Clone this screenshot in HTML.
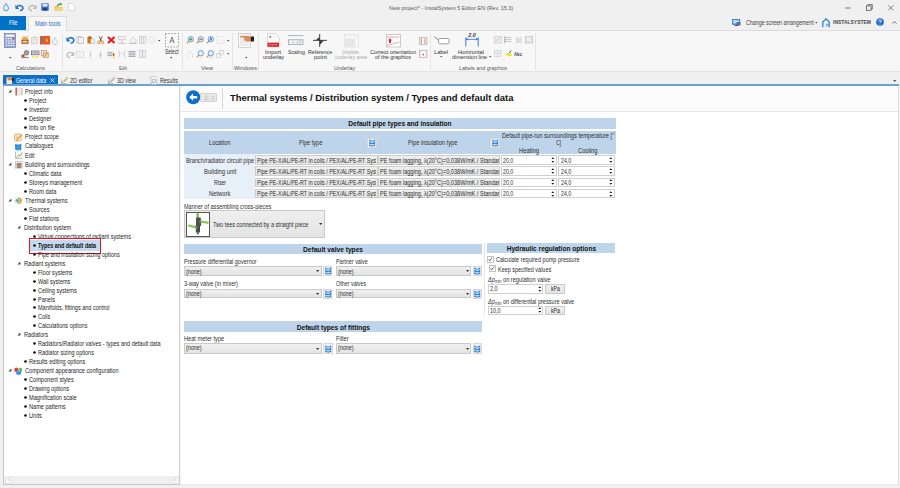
<!DOCTYPE html>
<html><head><meta charset="utf-8">
<style>
*{margin:0;padding:0;box-sizing:border-box}
html,body{width:900px;height:488px;overflow:hidden;background:#f0f0f0;font-family:"Liberation Sans",sans-serif;color:#1a1a1a;position:relative}
.a{position:absolute}
.t{position:absolute;white-space:nowrap;transform-origin:0 50%;-webkit-text-stroke:0}
svg{position:absolute;overflow:visible}
</style></head><body>
<div class="t" style="left:388.60px;top:4px;font-size:6.20px;line-height:8px;transform:scaleX(0.879);color:#5a5a5a;-webkit-text-stroke:0;">New project* - InstalSystem 5 Editor EN (Rev. 15.3)</div>
<svg style="left:844.5px;top:6.5px" width="6" height="2" viewBox="0 0 6 2"><path d="M0.2 1H5.6" stroke="#444" stroke-width="0.7"/></svg>
<svg style="left:866.0px;top:4.0px" width="7" height="7" viewBox="0 0 7 7"><rect x="0.6" y="1.9" width="4.4" height="4.4" fill="none" stroke="#444" stroke-width="0.7"/><path d="M1.9 1.9V0.6H6.3V5H5" fill="none" stroke="#444" stroke-width="0.7"/></svg>
<svg style="left:888px;top:4.5px" width="6" height="6"><path d="M0.3 0.3L5.3 5.3M5.3 0.3L0.3 5.3" stroke="#444" stroke-width="0.65"/></svg>
<div class="a" style="left:0px;top:16px;width:26px;height:14px;background:#0072c6"></div>
<div class="t" style="left:8.80px;top:19px;font-size:6.40px;line-height:8px;transform:scaleX(0.815);color:#fff;-webkit-text-stroke:0;">File</div>
<div class="a" style="left:28px;top:16px;width:39px;height:15px;background:#f7f7f7;border:1px solid #dcdcdc;border-bottom:none;z-index:2"></div>
<div class="t" style="left:35.40px;top:20px;font-size:6.40px;line-height:8px;transform:scaleX(0.878);color:#2a6ab8;-webkit-text-stroke:0;z-index:3">Main tools</div>
<div class="t" style="left:745.80px;top:19px;font-size:6.40px;line-height:8px;transform:scaleX(0.832);color:#444;-webkit-text-stroke:0;">Change screen arrangement</div>
<div class="t" style="left:833.00px;top:18px;font-size:6.20px;line-height:8px;transform:scaleX(0.801);font-weight:bold;color:#4a4a4a;-webkit-text-stroke:0;">INSTALSYSTEM</div>
<div class="a" style="left:0px;top:30px;width:900px;height:42px;background:#f7f7f7;border-top:1px solid #dcdcdc;border-bottom:1px solid #dadada"></div>
<div class="a" style="left:0px;top:71px;width:900px;height:1px;background:#e3e3e3"></div>
<div class="a" style="left:62px;top:33px;width:1px;height:37px;background:#e4e4e4"></div>
<div class="a" style="left:182px;top:33px;width:1px;height:37px;background:#e4e4e4"></div>
<div class="a" style="left:232px;top:33px;width:1px;height:37px;background:#e4e4e4"></div>
<div class="a" style="left:258px;top:33px;width:1px;height:37px;background:#e4e4e4"></div>
<div class="a" style="left:430px;top:33px;width:1px;height:37px;background:#e4e4e4"></div>
<div class="a" style="left:535px;top:33px;width:1px;height:37px;background:#e4e4e4"></div>
<div class="t" style="left:16.00px;top:64px;font-size:6.00px;line-height:8px;transform:scaleX(0.887);color:#555;-webkit-text-stroke:0;">Calculations</div>
<div class="t" style="left:119.00px;top:64px;font-size:6.00px;line-height:8px;transform:scaleX(0.774);color:#555;-webkit-text-stroke:0;">Edit</div>
<div class="t" style="left:201.00px;top:64px;font-size:6.00px;line-height:8px;transform:scaleX(0.930);color:#555;-webkit-text-stroke:0;">View</div>
<div class="t" style="left:234.00px;top:64px;font-size:6.00px;line-height:8px;transform:scaleX(0.945);color:#555;-webkit-text-stroke:0;">Windows</div>
<div class="t" style="left:334.00px;top:64px;font-size:6.00px;line-height:8px;transform:scaleX(0.875);color:#555;-webkit-text-stroke:0;">Underlay</div>
<div class="t" style="left:459.00px;top:64px;font-size:6.00px;line-height:8px;transform:scaleX(0.894);color:#555;-webkit-text-stroke:0;">Labels and graphics</div>
<div class="t" style="left:164.50px;top:48px;font-size:6.60px;line-height:8px;transform:scaleX(0.736);color:#333;-webkit-text-stroke:0;">Select</div>
<div class="t" style="left:265.20px;top:48px;font-size:6.00px;line-height:8px;transform:scaleX(0.947);color:#333;-webkit-text-stroke:0;">Import</div>
<div class="t" style="left:263.00px;top:53px;font-size:6.00px;line-height:8px;transform:scaleX(0.917);color:#333;-webkit-text-stroke:0;">underlay</div>
<div class="t" style="left:287.60px;top:48px;font-size:6.00px;line-height:8px;transform:scaleX(0.864);color:#333;-webkit-text-stroke:0;">Scaling</div>
<div class="t" style="left:307.90px;top:48px;font-size:6.00px;line-height:8px;transform:scaleX(0.871);color:#333;-webkit-text-stroke:0;">Reference</div>
<div class="t" style="left:314.00px;top:53px;font-size:6.00px;line-height:8px;transform:scaleX(0.984);color:#333;-webkit-text-stroke:0;">point</div>
<div class="t" style="left:342.00px;top:48px;font-size:6.00px;line-height:8px;transform:scaleX(0.968);color:#aaa;-webkit-text-stroke:0;">Visible</div>
<div class="t" style="left:335.00px;top:53px;font-size:6.00px;line-height:8px;transform:scaleX(0.872);color:#aaa;-webkit-text-stroke:0;">underlay area</div>
<div class="t" style="left:370.00px;top:48px;font-size:6.00px;line-height:8px;transform:scaleX(0.932);color:#333;-webkit-text-stroke:0;">Correct orientation</div>
<div class="t" style="left:375.00px;top:53px;font-size:6.00px;line-height:8px;transform:scaleX(0.915);color:#333;-webkit-text-stroke:0;">of the graphics</div>
<div class="t" style="left:434.00px;top:48px;font-size:6.00px;line-height:8px;transform:scaleX(0.954);color:#333;-webkit-text-stroke:0;">Label</div>
<div class="t" style="left:458.00px;top:48px;font-size:6.00px;line-height:8px;transform:scaleX(0.963);color:#333;-webkit-text-stroke:0;">Horizontal</div>
<div class="t" style="left:452.00px;top:53px;font-size:6.00px;line-height:8px;transform:scaleX(0.912);color:#333;-webkit-text-stroke:0;">dimension line</div>
<div class="a" style="left:3px;top:75px;width:55px;height:10px;background:#0b6fc9"></div>
<div class="t" style="left:15.80px;top:77px;font-size:6.40px;line-height:8px;transform:scaleX(0.816);color:#fff;-webkit-text-stroke:0;">General data</div>
<div class="t" style="left:70.20px;top:77px;font-size:6.40px;line-height:8px;transform:scaleX(0.870);color:#333;-webkit-text-stroke:0;">2D editor</div>
<div class="t" style="left:116.90px;top:77px;font-size:6.40px;line-height:8px;transform:scaleX(0.830);color:#333;-webkit-text-stroke:0;">3D view</div>
<div class="t" style="left:159.60px;top:77px;font-size:6.40px;line-height:8px;transform:scaleX(0.839);color:#333;-webkit-text-stroke:0;">Results</div>
<div class="a" style="left:3px;top:84px;width:896px;height:2px;background:#67a2d8"></div>
<div class="a" style="left:3px;top:86px;width:177px;height:399px;background:#fff;border:1px solid #c6c6c6;border-right-color:#d2d2d2;border-top:none"></div>
<div class="a" style="left:4px;top:476px;width:175px;height:8px;background:#f0f0f0"></div>
<div class="a" style="left:4.5px;top:476.5px;width:7px;height:7px;background:#f7f7f7;border:0.6px solid #e6e6e6"></div>
<div class="a" style="left:171.5px;top:476.5px;width:7px;height:7px;background:#f7f7f7;border:0.6px solid #e6e6e6"></div>
<svg style="left:6.8px;top:478.3px" width="3" height="4" viewBox="0 0 3 4"><path d="M2.4 0.3L0.4 1.8L2.4 3.3Z" fill="#cfcfcf"/></svg>
<svg style="left:174.0px;top:478.3px" width="3" height="4" viewBox="0 0 3 4"><path d="M0.4 0.3L2.4 1.8L0.4 3.3Z" fill="#cfcfcf"/></svg>
<div class="a" style="left:180px;top:86px;width:1.5px;height:399px;background:#f2f2f2"></div>
<div class="a" style="left:181px;top:86px;width:718px;height:399px;background:#fff;border-right:1.2px solid #e0e0e0;border-bottom:1.2px solid #e8e8e8"></div>
<div class="a" style="left:181px;top:86px;width:717px;height:25.6px;background:#fbfbfb;border-bottom:1.6px solid #e6e6e6"></div>
<div class="a" style="left:222px;top:88px;width:1px;height:21px;background:#d8d8d8"></div>
<div class="t" style="left:229.80px;top:93px;font-size:9.00px;line-height:11px;transform:scaleX(1.052);font-weight:bold;color:#111;">Thermal systems / Distribution system / Types and default data</div>
<svg style="left:7.6px;top:89.1px" width="4" height="4"><path d="M3.4 0.4L3.4 3.4L0.4 3.4Z" fill="#404040"/></svg>
<div class="t" style="left:24.60px;top:88px;font-size:6.50px;line-height:8px;transform:scaleX(0.860);color:#262626;">Project info</div>
<svg style="left:24.2px;top:99.0px" width="3" height="3" viewBox="0 0 3 3"><circle cx="1.5" cy="1.5" r="1.35" fill="#111"/></svg>
<div class="t" style="left:29.00px;top:97px;font-size:6.50px;line-height:8px;transform:scaleX(0.860);color:#262626;">Project</div>
<svg style="left:24.2px;top:108.0px" width="3" height="3" viewBox="0 0 3 3"><circle cx="1.5" cy="1.5" r="1.35" fill="#111"/></svg>
<div class="t" style="left:29.00px;top:106px;font-size:6.50px;line-height:8px;transform:scaleX(0.860);color:#262626;">Investor</div>
<svg style="left:24.2px;top:117.0px" width="3" height="3" viewBox="0 0 3 3"><circle cx="1.5" cy="1.5" r="1.35" fill="#111"/></svg>
<div class="t" style="left:29.00px;top:115px;font-size:6.50px;line-height:8px;transform:scaleX(0.860);color:#262626;">Designer</div>
<svg style="left:24.2px;top:126.0px" width="3" height="3" viewBox="0 0 3 3"><circle cx="1.5" cy="1.5" r="1.35" fill="#111"/></svg>
<div class="t" style="left:29.00px;top:124px;font-size:6.50px;line-height:8px;transform:scaleX(0.860);color:#262626;">Info on file</div>
<div class="t" style="left:24.60px;top:133px;font-size:6.50px;line-height:8px;transform:scaleX(0.860);color:#262626;">Project scope</div>
<div class="t" style="left:24.60px;top:142px;font-size:6.50px;line-height:8px;transform:scaleX(0.860);color:#262626;">Catalogues</div>
<div class="t" style="left:24.60px;top:152px;font-size:6.50px;line-height:8px;transform:scaleX(0.860);color:#262626;">Edit</div>
<svg style="left:7.6px;top:162.1px" width="4" height="4"><path d="M3.4 0.4L3.4 3.4L0.4 3.4Z" fill="#404040"/></svg>
<div class="t" style="left:24.60px;top:161px;font-size:6.50px;line-height:8px;transform:scaleX(0.860);color:#262626;">Building and surroundings</div>
<svg style="left:24.2px;top:172.0px" width="3" height="3" viewBox="0 0 3 3"><circle cx="1.5" cy="1.5" r="1.35" fill="#111"/></svg>
<div class="t" style="left:29.00px;top:170px;font-size:6.50px;line-height:8px;transform:scaleX(0.860);color:#262626;">Climatic data</div>
<svg style="left:24.2px;top:181.0px" width="3" height="3" viewBox="0 0 3 3"><circle cx="1.5" cy="1.5" r="1.35" fill="#111"/></svg>
<div class="t" style="left:29.00px;top:179px;font-size:6.50px;line-height:8px;transform:scaleX(0.860);color:#262626;">Storeys management</div>
<svg style="left:24.2px;top:190.0px" width="3" height="3" viewBox="0 0 3 3"><circle cx="1.5" cy="1.5" r="1.35" fill="#111"/></svg>
<div class="t" style="left:29.00px;top:188px;font-size:6.50px;line-height:8px;transform:scaleX(0.860);color:#262626;">Room data</div>
<svg style="left:7.6px;top:198.1px" width="4" height="4"><path d="M3.4 0.4L3.4 3.4L0.4 3.4Z" fill="#404040"/></svg>
<div class="t" style="left:24.60px;top:197px;font-size:6.50px;line-height:8px;transform:scaleX(0.860);color:#262626;">Thermal systems</div>
<svg style="left:24.2px;top:208.0px" width="3" height="3" viewBox="0 0 3 3"><circle cx="1.5" cy="1.5" r="1.35" fill="#111"/></svg>
<div class="t" style="left:29.00px;top:206px;font-size:6.50px;line-height:8px;transform:scaleX(0.860);color:#262626;">Sources</div>
<svg style="left:24.2px;top:217.0px" width="3" height="3" viewBox="0 0 3 3"><circle cx="1.5" cy="1.5" r="1.35" fill="#111"/></svg>
<div class="t" style="left:29.00px;top:215px;font-size:6.50px;line-height:8px;transform:scaleX(0.860);color:#262626;">Flat stations</div>
<svg style="left:16.8px;top:225.1px" width="4" height="4"><path d="M3.4 0.4L3.4 3.4L0.4 3.4Z" fill="#404040"/></svg>
<div class="t" style="left:23.60px;top:224px;font-size:6.50px;line-height:8px;transform:scaleX(0.860);color:#262626;">Distribution system</div>
<svg style="left:32.7px;top:235.0px" width="3" height="3" viewBox="0 0 3 3"><circle cx="1.5" cy="1.5" r="1.35" fill="#111"/></svg>
<div class="t" style="left:38.00px;top:233px;font-size:6.50px;line-height:8px;transform:scaleX(0.850);color:#262626;">Virtual connections of radiant systems</div>
<div class="a" style="left:28.5px;top:238px;width:72.5px;height:15.5px;border:1.5px solid #e8101a"></div>
<div class="a" style="left:30px;top:240px;width:69.5px;height:10.5px;background:#c4daef"></div>
<svg style="left:32.9px;top:244.0px" width="3" height="3" viewBox="0 0 3 3"><circle cx="1.5" cy="1.5" r="1.35" fill="#111"/></svg>
<div class="t" style="left:38.00px;top:242px;font-size:6.50px;line-height:8px;transform:scaleX(0.829);font-weight:bold;color:#111;">Types and default data</div>
<svg style="left:32.7px;top:253.0px" width="3" height="3" viewBox="0 0 3 3"><circle cx="1.5" cy="1.5" r="1.35" fill="#111"/></svg>
<div class="t" style="left:38.00px;top:251px;font-size:6.50px;line-height:8px;transform:scaleX(0.850);color:#262626;">Pipe and insulation sizing options</div>
<svg style="left:16.8px;top:261.1px" width="4" height="4"><path d="M3.4 0.4L3.4 3.4L0.4 3.4Z" fill="#404040"/></svg>
<div class="t" style="left:23.60px;top:260px;font-size:6.50px;line-height:8px;transform:scaleX(0.860);color:#262626;">Radiant systems</div>
<svg style="left:32.7px;top:271.0px" width="3" height="3" viewBox="0 0 3 3"><circle cx="1.5" cy="1.5" r="1.35" fill="#111"/></svg>
<div class="t" style="left:38.00px;top:269px;font-size:6.50px;line-height:8px;transform:scaleX(0.850);color:#262626;">Floor systems</div>
<svg style="left:32.7px;top:280.0px" width="3" height="3" viewBox="0 0 3 3"><circle cx="1.5" cy="1.5" r="1.35" fill="#111"/></svg>
<div class="t" style="left:38.00px;top:278px;font-size:6.50px;line-height:8px;transform:scaleX(0.850);color:#262626;">Wall systems</div>
<svg style="left:32.7px;top:289.0px" width="3" height="3" viewBox="0 0 3 3"><circle cx="1.5" cy="1.5" r="1.35" fill="#111"/></svg>
<div class="t" style="left:38.00px;top:287px;font-size:6.50px;line-height:8px;transform:scaleX(0.850);color:#262626;">Ceiling systems</div>
<svg style="left:32.7px;top:298.0px" width="3" height="3" viewBox="0 0 3 3"><circle cx="1.5" cy="1.5" r="1.35" fill="#111"/></svg>
<div class="t" style="left:38.00px;top:296px;font-size:6.50px;line-height:8px;transform:scaleX(0.850);color:#262626;">Panels</div>
<svg style="left:32.7px;top:306.0px" width="3" height="3" viewBox="0 0 3 3"><circle cx="1.5" cy="1.5" r="1.35" fill="#111"/></svg>
<div class="t" style="left:38.00px;top:304px;font-size:6.50px;line-height:8px;transform:scaleX(0.850);color:#262626;">Manifolds, fittings and control</div>
<svg style="left:32.7px;top:315.0px" width="3" height="3" viewBox="0 0 3 3"><circle cx="1.5" cy="1.5" r="1.35" fill="#111"/></svg>
<div class="t" style="left:38.00px;top:313px;font-size:6.50px;line-height:8px;transform:scaleX(0.850);color:#262626;">Coils</div>
<svg style="left:32.7px;top:324.0px" width="3" height="3" viewBox="0 0 3 3"><circle cx="1.5" cy="1.5" r="1.35" fill="#111"/></svg>
<div class="t" style="left:38.00px;top:322px;font-size:6.50px;line-height:8px;transform:scaleX(0.850);color:#262626;">Calculations options</div>
<svg style="left:16.8px;top:332.1px" width="4" height="4"><path d="M3.4 0.4L3.4 3.4L0.4 3.4Z" fill="#404040"/></svg>
<div class="t" style="left:23.60px;top:331px;font-size:6.50px;line-height:8px;transform:scaleX(0.860);color:#262626;">Radiators</div>
<svg style="left:32.7px;top:342.0px" width="3" height="3" viewBox="0 0 3 3"><circle cx="1.5" cy="1.5" r="1.35" fill="#111"/></svg>
<div class="t" style="left:38.00px;top:340px;font-size:6.50px;line-height:8px;transform:scaleX(0.850);color:#262626;">Radiators/Radiator valves - types and default data</div>
<svg style="left:32.7px;top:351.0px" width="3" height="3" viewBox="0 0 3 3"><circle cx="1.5" cy="1.5" r="1.35" fill="#111"/></svg>
<div class="t" style="left:38.00px;top:349px;font-size:6.50px;line-height:8px;transform:scaleX(0.850);color:#262626;">Radiator sizing options</div>
<svg style="left:24.2px;top:360.0px" width="3" height="3" viewBox="0 0 3 3"><circle cx="1.5" cy="1.5" r="1.35" fill="#111"/></svg>
<div class="t" style="left:29.00px;top:358px;font-size:6.50px;line-height:8px;transform:scaleX(0.860);color:#262626;">Results editing options</div>
<svg style="left:7.6px;top:368.1px" width="4" height="4"><path d="M3.4 0.4L3.4 3.4L0.4 3.4Z" fill="#404040"/></svg>
<div class="t" style="left:24.60px;top:367px;font-size:6.50px;line-height:8px;transform:scaleX(0.860);color:#262626;">Component appearance configuration</div>
<svg style="left:24.2px;top:378.0px" width="3" height="3" viewBox="0 0 3 3"><circle cx="1.5" cy="1.5" r="1.35" fill="#111"/></svg>
<div class="t" style="left:29.00px;top:376px;font-size:6.50px;line-height:8px;transform:scaleX(0.860);color:#262626;">Component styles</div>
<svg style="left:24.2px;top:387.0px" width="3" height="3" viewBox="0 0 3 3"><circle cx="1.5" cy="1.5" r="1.35" fill="#111"/></svg>
<div class="t" style="left:29.00px;top:385px;font-size:6.50px;line-height:8px;transform:scaleX(0.860);color:#262626;">Drawing options</div>
<svg style="left:24.2px;top:396.0px" width="3" height="3" viewBox="0 0 3 3"><circle cx="1.5" cy="1.5" r="1.35" fill="#111"/></svg>
<div class="t" style="left:29.00px;top:394px;font-size:6.50px;line-height:8px;transform:scaleX(0.860);color:#262626;">Magnification scale</div>
<svg style="left:24.2px;top:405.0px" width="3" height="3" viewBox="0 0 3 3"><circle cx="1.5" cy="1.5" r="1.35" fill="#111"/></svg>
<div class="t" style="left:29.00px;top:403px;font-size:6.50px;line-height:8px;transform:scaleX(0.860);color:#262626;">Name patterns</div>
<svg style="left:24.2px;top:414.0px" width="3" height="3" viewBox="0 0 3 3"><circle cx="1.5" cy="1.5" r="1.35" fill="#111"/></svg>
<div class="t" style="left:29.00px;top:412px;font-size:6.50px;line-height:8px;transform:scaleX(0.860);color:#262626;">Units</div>
<svg style="left:185.5px;top:90px" width="15" height="15"><circle cx="7.2" cy="7.2" r="7" fill="#0e6fcb"/><path d="M3.2 7.2L7 3.6V5.9H11.2V8.5H7V10.8Z" fill="#fff"/></svg>
<div class="a" style="left:200px;top:92.5px;width:17px;height:9.5px;background:#e9e9e9;border:1px solid #d2d2d2;border-radius:1px;z-index:0"></div>
<svg style="left:201px;top:93px" width="16" height="9"><path d="M3.5 6.5h4M4.2 6.5v-2.5a1.3 1.3 0 0 1 2.6 0v2.5" stroke="#bbb" stroke-width="0.7" fill="none"/><path d="M10.5 2.5l1.5 1.5l1.5-1.5M10.5 4.5l1.5 1.5l1.5-1.5M12 6v1.5" stroke="#bbb" stroke-width="0.7" fill="none"/></svg>
<div class="a" style="left:184px;top:118px;width:432px;height:11px;background:#bdd4ea"></div>
<div class="t" style="left:348.30px;top:120px;font-size:6.60px;line-height:8px;font-weight:bold;color:#111;">Default pipe types and insulation</div>
<div class="a" style="left:184px;top:131px;width:432px;height:23px;background:#bdd4ea"></div>
<div class="a" style="left:184px;top:154px;width:71px;height:45px;background:#e7eff8"></div>
<div class="t" style="left:208.70px;top:139px;font-size:6.30px;line-height:8px;transform:scaleX(0.894);color:#2e2e2e;">Location</div>
<div class="t" style="left:299.00px;top:139px;font-size:6.30px;line-height:8px;transform:scaleX(0.887);color:#2e2e2e;">Pipe type</div>
<div class="t" style="left:408.30px;top:139px;font-size:6.30px;line-height:8px;transform:scaleX(0.904);color:#2e2e2e;">Pipe insulation type</div>
<div class="t" style="left:501.70px;top:132px;font-size:6.30px;line-height:8px;transform:scaleX(0.902);color:#2e2e2e;">Default pipe-run surroundings temperature [°</div>
<div class="t" style="left:555.80px;top:139px;font-size:6.30px;line-height:8px;transform:scaleX(0.794);color:#2e2e2e;">C]</div>
<div class="t" style="left:518.80px;top:147px;font-size:6.30px;line-height:8px;transform:scaleX(0.921);color:#2e2e2e;">Heating</div>
<div class="t" style="left:577.50px;top:147px;font-size:6.30px;line-height:8px;transform:scaleX(0.913);color:#2e2e2e;">Cooling</div>
<div class="a" style="left:367.3px;top:138.3px;width:10px;height:10px;background:#f4f1ef;border:1px solid #d9d6d3"></div>
<svg style="left:369.2px;top:139.4px" width="6.5" height="8" viewBox="0 0 6.5 8"><path d="M0.3 0.40Q3.25 1.40 6.2 0.40V2.20Q3.25 3.00 0.3 2.20Z" fill="#1677d8"/><ellipse cx="3.25" cy="1.15" rx="1.9" ry="0.55" fill="#bfe4ff"/><path d="M0.3 2.85Q3.25 3.85 6.2 2.85V4.65Q3.25 5.45 0.3 4.65Z" fill="#1677d8"/><ellipse cx="3.25" cy="3.60" rx="1.9" ry="0.55" fill="#bfe4ff"/><path d="M0.3 5.30Q3.25 6.30 6.2 5.30V7.10Q3.25 7.90 0.3 7.10Z" fill="#1677d8"/><ellipse cx="3.25" cy="6.05" rx="1.9" ry="0.55" fill="#bfe4ff"/></svg>
<div class="a" style="left:489.7px;top:138.3px;width:10px;height:10px;background:#f4f1ef;border:1px solid #d9d6d3"></div>
<svg style="left:491.6px;top:139.4px" width="6.5" height="8" viewBox="0 0 6.5 8"><path d="M0.3 0.40Q3.25 1.40 6.2 0.40V2.20Q3.25 3.00 0.3 2.20Z" fill="#1677d8"/><ellipse cx="3.25" cy="1.15" rx="1.9" ry="0.55" fill="#bfe4ff"/><path d="M0.3 2.85Q3.25 3.85 6.2 2.85V4.65Q3.25 5.45 0.3 4.65Z" fill="#1677d8"/><ellipse cx="3.25" cy="3.60" rx="1.9" ry="0.55" fill="#bfe4ff"/><path d="M0.3 5.30Q3.25 6.30 6.2 5.30V7.10Q3.25 7.90 0.3 7.10Z" fill="#1677d8"/><ellipse cx="3.25" cy="6.05" rx="1.9" ry="0.55" fill="#bfe4ff"/></svg>
<div class="t" style="left:185.50px;top:157px;font-size:6.30px;line-height:8px;transform:scaleX(0.910);color:#2e2e2e;">Branch/radiator circuit pipe</div>
<div class="a" style="left:255px;top:155px;width:122.5px;height:9.6px;background:linear-gradient(#efefef,#e5e5e5);border:1px solid #cdcdcd"></div>
<div class="a" style="left:256px;top:155px;width:120px;height:10px;overflow:hidden;">
<div class="t" style="left:0.80px;top:2px;font-size:6.30px;line-height:8px;transform:scaleX(0.848);color:#2e2e2e;">Pipe PE-X/AL/PE-RT in coils / PEX/AL/PE-RT System</div>
</div>
<div class="a" style="left:378.3px;top:155px;width:121.5px;height:9.6px;background:linear-gradient(#efefef,#e5e5e5);border:1px solid #cdcdcd"></div>
<div class="a" style="left:379px;top:155px;width:120px;height:10px;overflow:hidden;">
<div class="t" style="left:0.50px;top:2px;font-size:6.30px;line-height:8px;transform:scaleX(0.885);color:#2e2e2e;">PE foam lagging, λ(20°C)=0,038W/mK / Standard</div>
</div>
<div class="a" style="left:500.5px;top:155px;width:56.200000000000045px;height:9.6px;background:#fff;border:1px solid #cfcfcf"></div>
<div class="t" style="left:502.80px;top:157px;font-size:6.30px;line-height:8px;transform:scaleX(0.832);color:#2e2e2e;">20,0</div>
<svg style="left:550.9px;top:155.8px" width="4" height="8"><path d="M0.3 3L1.8 1.3L3.3 3ZM0.3 5L1.8 6.7L3.3 5Z" fill="#222"/></svg>
<div class="a" style="left:558.3px;top:155px;width:56.40000000000009px;height:9.6px;background:#fff;border:1px solid #cfcfcf"></div>
<div class="t" style="left:560.60px;top:157px;font-size:6.30px;line-height:8px;transform:scaleX(0.832);color:#2e2e2e;">24,0</div>
<svg style="left:608.9px;top:155.8px" width="4" height="8"><path d="M0.3 3L1.8 1.3L3.3 3ZM0.3 5L1.8 6.7L3.3 5Z" fill="#222"/></svg>
<div class="t" style="left:203.70px;top:168px;font-size:6.30px;line-height:8px;transform:scaleX(0.941);color:#2e2e2e;">Building unit</div>
<div class="a" style="left:255px;top:166.3px;width:122.5px;height:9.6px;background:linear-gradient(#efefef,#e5e5e5);border:1px solid #cdcdcd"></div>
<div class="a" style="left:256px;top:166px;width:120px;height:10px;overflow:hidden;">
<div class="t" style="left:0.80px;top:2px;font-size:6.30px;line-height:8px;transform:scaleX(0.848);color:#2e2e2e;">Pipe PE-X/AL/PE-RT in coils / PEX/AL/PE-RT System</div>
</div>
<div class="a" style="left:378.3px;top:166.3px;width:121.5px;height:9.6px;background:linear-gradient(#efefef,#e5e5e5);border:1px solid #cdcdcd"></div>
<div class="a" style="left:379px;top:166px;width:120px;height:10px;overflow:hidden;">
<div class="t" style="left:0.50px;top:2px;font-size:6.30px;line-height:8px;transform:scaleX(0.885);color:#2e2e2e;">PE foam lagging, λ(20°C)=0,038W/mK / Standard</div>
</div>
<div class="a" style="left:500.5px;top:166.3px;width:56.200000000000045px;height:9.6px;background:#fff;border:1px solid #cfcfcf"></div>
<div class="t" style="left:502.80px;top:168px;font-size:6.30px;line-height:8px;transform:scaleX(0.832);color:#2e2e2e;">20,0</div>
<svg style="left:550.9px;top:167.1px" width="4" height="8"><path d="M0.3 3L1.8 1.3L3.3 3ZM0.3 5L1.8 6.7L3.3 5Z" fill="#222"/></svg>
<div class="a" style="left:558.3px;top:166.3px;width:56.40000000000009px;height:9.6px;background:#fff;border:1px solid #cfcfcf"></div>
<div class="t" style="left:560.60px;top:168px;font-size:6.30px;line-height:8px;transform:scaleX(0.832);color:#2e2e2e;">24,0</div>
<svg style="left:608.9px;top:167.1px" width="4" height="8"><path d="M0.3 3L1.8 1.3L3.3 3ZM0.3 5L1.8 6.7L3.3 5Z" fill="#222"/></svg>
<div class="t" style="left:213.60px;top:179px;font-size:6.30px;line-height:8px;transform:scaleX(0.823);color:#2e2e2e;">Riser</div>
<div class="a" style="left:255px;top:177.5px;width:122.5px;height:9.6px;background:linear-gradient(#efefef,#e5e5e5);border:1px solid #cdcdcd"></div>
<div class="a" style="left:256px;top:177px;width:120px;height:10px;overflow:hidden;">
<div class="t" style="left:0.80px;top:2px;font-size:6.30px;line-height:8px;transform:scaleX(0.848);color:#2e2e2e;">Pipe PE-X/AL/PE-RT in coils / PEX/AL/PE-RT System</div>
</div>
<div class="a" style="left:378.3px;top:177.5px;width:121.5px;height:9.6px;background:linear-gradient(#efefef,#e5e5e5);border:1px solid #cdcdcd"></div>
<div class="a" style="left:379px;top:177px;width:120px;height:10px;overflow:hidden;">
<div class="t" style="left:0.50px;top:2px;font-size:6.30px;line-height:8px;transform:scaleX(0.885);color:#2e2e2e;">PE foam lagging, λ(20°C)=0,038W/mK / Standard</div>
</div>
<div class="a" style="left:500.5px;top:177.5px;width:56.200000000000045px;height:9.6px;background:#fff;border:1px solid #cfcfcf"></div>
<div class="t" style="left:502.80px;top:179px;font-size:6.30px;line-height:8px;transform:scaleX(0.832);color:#2e2e2e;">20,0</div>
<svg style="left:550.9px;top:178.3px" width="4" height="8"><path d="M0.3 3L1.8 1.3L3.3 3ZM0.3 5L1.8 6.7L3.3 5Z" fill="#222"/></svg>
<div class="a" style="left:558.3px;top:177.5px;width:56.40000000000009px;height:9.6px;background:#fff;border:1px solid #cfcfcf"></div>
<div class="t" style="left:560.60px;top:179px;font-size:6.30px;line-height:8px;transform:scaleX(0.832);color:#2e2e2e;">24,0</div>
<svg style="left:608.9px;top:178.3px" width="4" height="8"><path d="M0.3 3L1.8 1.3L3.3 3ZM0.3 5L1.8 6.7L3.3 5Z" fill="#222"/></svg>
<div class="t" style="left:208.90px;top:190px;font-size:6.30px;line-height:8px;transform:scaleX(0.922);color:#2e2e2e;">Network</div>
<div class="a" style="left:255px;top:188.8px;width:122.5px;height:9.6px;background:linear-gradient(#efefef,#e5e5e5);border:1px solid #cdcdcd"></div>
<div class="a" style="left:256px;top:188px;width:120px;height:10px;overflow:hidden;">
<div class="t" style="left:0.80px;top:2px;font-size:6.30px;line-height:8px;transform:scaleX(0.848);color:#2e2e2e;">Pipe PE-X/AL/PE-RT in coils / PEX/AL/PE-RT System</div>
</div>
<div class="a" style="left:378.3px;top:188.8px;width:121.5px;height:9.6px;background:linear-gradient(#efefef,#e5e5e5);border:1px solid #cdcdcd"></div>
<div class="a" style="left:379px;top:188px;width:120px;height:10px;overflow:hidden;">
<div class="t" style="left:0.50px;top:2px;font-size:6.30px;line-height:8px;transform:scaleX(0.885);color:#2e2e2e;">PE foam lagging, λ(20°C)=0,038W/mK / Standard</div>
</div>
<div class="a" style="left:500.5px;top:188.8px;width:56.200000000000045px;height:9.6px;background:#fff;border:1px solid #cfcfcf"></div>
<div class="t" style="left:502.80px;top:190px;font-size:6.30px;line-height:8px;transform:scaleX(0.832);color:#2e2e2e;">20,0</div>
<svg style="left:550.9px;top:189.6px" width="4" height="8"><path d="M0.3 3L1.8 1.3L3.3 3ZM0.3 5L1.8 6.7L3.3 5Z" fill="#222"/></svg>
<div class="a" style="left:558.3px;top:188.8px;width:56.40000000000009px;height:9.6px;background:#fff;border:1px solid #cfcfcf"></div>
<div class="t" style="left:560.60px;top:190px;font-size:6.30px;line-height:8px;transform:scaleX(0.832);color:#2e2e2e;">24,0</div>
<svg style="left:608.9px;top:189.6px" width="4" height="8"><path d="M0.3 3L1.8 1.3L3.3 3ZM0.3 5L1.8 6.7L3.3 5Z" fill="#222"/></svg>
<div class="t" style="left:184.00px;top:203px;font-size:6.30px;line-height:8px;transform:scaleX(0.881);color:#2e2e2e;">Manner of assembling cross-pieces</div>
<div class="a" style="left:184px;top:210.4px;width:140.5px;height:27.4px;background:linear-gradient(#efefef,#e4e4e4);border:1px solid #c9c9c9"></div>
<div class="a" style="left:186.2px;top:212px;width:24.2px;height:24.6px;background:#fff;border:1px solid #555"></div>
<svg style="left:187px;top:213px" width="23" height="23">
<path d="M10.7 1.2V5" stroke="#79b83a" stroke-width="2.3" stroke-linecap="round"/>
<path d="M9 4.5h4.5l0.6 3v5.5h-5.1z" fill="#4f4f4f"/>
<path d="M13.8 8.6L20.6 9.6" stroke="#8cc84b" stroke-width="2.4" stroke-linecap="round"/>
<path d="M12.5 8.5h2v1.8h-2z" fill="#777"/>
<path d="M8.8 12h4.2v7.5h-4.2z" fill="#4a4a4a"/>
<path d="M2.2 12.6L9.2 14.4" stroke="#8cc84b" stroke-width="2.4" stroke-linecap="round"/>
<path d="M8 13.2h2v1.6h-2z" fill="#777"/>
<path d="M10.8 19.5V21.3" stroke="#2a4a4a" stroke-width="1.8"/>
</svg>
<div class="t" style="left:213.20px;top:221px;font-size:6.50px;line-height:8px;transform:scaleX(0.848);color:#2e2e2e;">Two tees connected by a straight piece</div>
<svg style="left:319px;top:222.5px" width="4" height="3"><path d="M0 0H3.4L1.7 2Z" fill="#333"/></svg>
<div class="a" style="left:184px;top:244px;width:298px;height:10px;background:#bdd4ea"></div>
<div class="t" style="left:303.40px;top:246px;font-size:6.60px;line-height:8px;transform:scaleX(1.005);font-weight:bold;color:#111;">Default valve types</div>
<div class="t" style="left:184.00px;top:258px;font-size:6.30px;line-height:8px;transform:scaleX(0.881);color:#2e2e2e;">Pressure differential governor</div>
<div class="t" style="left:335.80px;top:258px;font-size:6.30px;line-height:8px;transform:scaleX(0.854);color:#2e2e2e;">Partner valve</div>
<div class="a" style="left:184px;top:266.3px;width:137.5px;height:9.8px;background:linear-gradient(#efefef,#e4e4e4);border:1px solid #c9c9c9"></div>
<div class="t" style="left:186.00px;top:268px;font-size:6.30px;line-height:8px;transform:scaleX(0.860);color:#2e2e2e;">(none)</div>
<svg style="left:316.2px;top:270.3px" width="4" height="3"><path d="M0 0H3.2L1.6 1.9Z" fill="#333"/></svg>
<div class="a" style="left:323.3px;top:266.3px;width:9px;height:10px;background:#f4f1ef;border:1px solid #d9d6d3"></div>
<svg style="left:324.7px;top:267.4px" width="6.5" height="8" viewBox="0 0 6.5 8"><path d="M0.3 0.40Q3.25 1.40 6.2 0.40V2.20Q3.25 3.00 0.3 2.20Z" fill="#1677d8"/><ellipse cx="3.25" cy="1.15" rx="1.9" ry="0.55" fill="#bfe4ff"/><path d="M0.3 2.85Q3.25 3.85 6.2 2.85V4.65Q3.25 5.45 0.3 4.65Z" fill="#1677d8"/><ellipse cx="3.25" cy="3.60" rx="1.9" ry="0.55" fill="#bfe4ff"/><path d="M0.3 5.30Q3.25 6.30 6.2 5.30V7.10Q3.25 7.90 0.3 7.10Z" fill="#1677d8"/><ellipse cx="3.25" cy="6.05" rx="1.9" ry="0.55" fill="#bfe4ff"/></svg>
<div class="a" style="left:335.8px;top:266.3px;width:135.7px;height:9.8px;background:linear-gradient(#efefef,#e4e4e4);border:1px solid #c9c9c9"></div>
<div class="t" style="left:337.80px;top:268px;font-size:6.30px;line-height:8px;transform:scaleX(0.860);color:#2e2e2e;">(none)</div>
<svg style="left:466.2px;top:270.3px" width="4" height="3"><path d="M0 0H3.2L1.6 1.9Z" fill="#333"/></svg>
<div class="a" style="left:472.8px;top:266.3px;width:9px;height:10px;background:#f4f1ef;border:1px solid #d9d6d3"></div>
<svg style="left:474.2px;top:267.4px" width="6.5" height="8" viewBox="0 0 6.5 8"><path d="M0.3 0.40Q3.25 1.40 6.2 0.40V2.20Q3.25 3.00 0.3 2.20Z" fill="#1677d8"/><ellipse cx="3.25" cy="1.15" rx="1.9" ry="0.55" fill="#bfe4ff"/><path d="M0.3 2.85Q3.25 3.85 6.2 2.85V4.65Q3.25 5.45 0.3 4.65Z" fill="#1677d8"/><ellipse cx="3.25" cy="3.60" rx="1.9" ry="0.55" fill="#bfe4ff"/><path d="M0.3 5.30Q3.25 6.30 6.2 5.30V7.10Q3.25 7.90 0.3 7.10Z" fill="#1677d8"/><ellipse cx="3.25" cy="6.05" rx="1.9" ry="0.55" fill="#bfe4ff"/></svg>
<div class="t" style="left:184.00px;top:280px;font-size:6.30px;line-height:8px;transform:scaleX(0.881);color:#2e2e2e;">3-way valve (in mixer)</div>
<div class="t" style="left:335.80px;top:280px;font-size:6.30px;line-height:8px;transform:scaleX(0.854);color:#2e2e2e;">Other valves</div>
<div class="a" style="left:184px;top:288.6px;width:137.5px;height:9.8px;background:linear-gradient(#efefef,#e4e4e4);border:1px solid #c9c9c9"></div>
<div class="t" style="left:186.00px;top:290px;font-size:6.30px;line-height:8px;transform:scaleX(0.860);color:#2e2e2e;">(none)</div>
<svg style="left:316.2px;top:292.6px" width="4" height="3"><path d="M0 0H3.2L1.6 1.9Z" fill="#333"/></svg>
<div class="a" style="left:323.3px;top:288.6px;width:9px;height:10px;background:#f4f1ef;border:1px solid #d9d6d3"></div>
<svg style="left:324.7px;top:289.7px" width="6.5" height="8" viewBox="0 0 6.5 8"><path d="M0.3 0.40Q3.25 1.40 6.2 0.40V2.20Q3.25 3.00 0.3 2.20Z" fill="#1677d8"/><ellipse cx="3.25" cy="1.15" rx="1.9" ry="0.55" fill="#bfe4ff"/><path d="M0.3 2.85Q3.25 3.85 6.2 2.85V4.65Q3.25 5.45 0.3 4.65Z" fill="#1677d8"/><ellipse cx="3.25" cy="3.60" rx="1.9" ry="0.55" fill="#bfe4ff"/><path d="M0.3 5.30Q3.25 6.30 6.2 5.30V7.10Q3.25 7.90 0.3 7.10Z" fill="#1677d8"/><ellipse cx="3.25" cy="6.05" rx="1.9" ry="0.55" fill="#bfe4ff"/></svg>
<div class="a" style="left:335.8px;top:288.6px;width:135.7px;height:9.8px;background:linear-gradient(#efefef,#e4e4e4);border:1px solid #c9c9c9"></div>
<div class="t" style="left:337.80px;top:290px;font-size:6.30px;line-height:8px;transform:scaleX(0.860);color:#2e2e2e;">(none)</div>
<svg style="left:466.2px;top:292.6px" width="4" height="3"><path d="M0 0H3.2L1.6 1.9Z" fill="#333"/></svg>
<div class="a" style="left:472.8px;top:288.6px;width:9px;height:10px;background:#f4f1ef;border:1px solid #d9d6d3"></div>
<svg style="left:474.2px;top:289.7px" width="6.5" height="8" viewBox="0 0 6.5 8"><path d="M0.3 0.40Q3.25 1.40 6.2 0.40V2.20Q3.25 3.00 0.3 2.20Z" fill="#1677d8"/><ellipse cx="3.25" cy="1.15" rx="1.9" ry="0.55" fill="#bfe4ff"/><path d="M0.3 2.85Q3.25 3.85 6.2 2.85V4.65Q3.25 5.45 0.3 4.65Z" fill="#1677d8"/><ellipse cx="3.25" cy="3.60" rx="1.9" ry="0.55" fill="#bfe4ff"/><path d="M0.3 5.30Q3.25 6.30 6.2 5.30V7.10Q3.25 7.90 0.3 7.10Z" fill="#1677d8"/><ellipse cx="3.25" cy="6.05" rx="1.9" ry="0.55" fill="#bfe4ff"/></svg>
<div class="a" style="left:484.3px;top:243px;width:0.8px;height:72px;background:#e3e3e3"></div>
<div class="a" style="left:184px;top:321.3px;width:298px;height:10.5px;background:#bdd4ea"></div>
<div class="t" style="left:296.75px;top:324px;font-size:6.60px;line-height:8px;font-weight:bold;color:#111;">Default types of fittings</div>
<div class="t" style="left:184.00px;top:335px;font-size:6.30px;line-height:8px;transform:scaleX(0.897);color:#2e2e2e;">Heat meter type</div>
<div class="t" style="left:335.80px;top:335px;font-size:6.30px;line-height:8px;transform:scaleX(0.907);color:#2e2e2e;">Filter</div>
<div class="a" style="left:184px;top:343.3px;width:137.5px;height:10.3px;background:linear-gradient(#efefef,#e4e4e4);border:1px solid #c9c9c9"></div>
<div class="t" style="left:186.00px;top:344px;font-size:6.30px;line-height:8px;transform:scaleX(0.860);color:#2e2e2e;">(none)</div>
<svg style="left:316.2px;top:347.6px" width="4" height="3"><path d="M0 0H3.2L1.6 1.9Z" fill="#333"/></svg>
<div class="a" style="left:323.3px;top:343.3px;width:9.5px;height:10.5px;background:#f4f1ef;border:1px solid #d9d6d3"></div>
<svg style="left:324.9px;top:344.7px" width="6.5" height="8" viewBox="0 0 6.5 8"><path d="M0.3 0.40Q3.25 1.40 6.2 0.40V2.20Q3.25 3.00 0.3 2.20Z" fill="#1677d8"/><ellipse cx="3.25" cy="1.15" rx="1.9" ry="0.55" fill="#bfe4ff"/><path d="M0.3 2.85Q3.25 3.85 6.2 2.85V4.65Q3.25 5.45 0.3 4.65Z" fill="#1677d8"/><ellipse cx="3.25" cy="3.60" rx="1.9" ry="0.55" fill="#bfe4ff"/><path d="M0.3 5.30Q3.25 6.30 6.2 5.30V7.10Q3.25 7.90 0.3 7.10Z" fill="#1677d8"/><ellipse cx="3.25" cy="6.05" rx="1.9" ry="0.55" fill="#bfe4ff"/></svg>
<div class="a" style="left:335.8px;top:343.3px;width:135.7px;height:10.3px;background:linear-gradient(#efefef,#e4e4e4);border:1px solid #c9c9c9"></div>
<div class="t" style="left:337.80px;top:344px;font-size:6.30px;line-height:8px;transform:scaleX(0.860);color:#2e2e2e;">(none)</div>
<svg style="left:466.2px;top:347.6px" width="4" height="3"><path d="M0 0H3.2L1.6 1.9Z" fill="#333"/></svg>
<div class="a" style="left:472.8px;top:343.3px;width:9px;height:10.5px;background:#f4f1ef;border:1px solid #d9d6d3"></div>
<svg style="left:474.2px;top:344.7px" width="6.5" height="8" viewBox="0 0 6.5 8"><path d="M0.3 0.40Q3.25 1.40 6.2 0.40V2.20Q3.25 3.00 0.3 2.20Z" fill="#1677d8"/><ellipse cx="3.25" cy="1.15" rx="1.9" ry="0.55" fill="#bfe4ff"/><path d="M0.3 2.85Q3.25 3.85 6.2 2.85V4.65Q3.25 5.45 0.3 4.65Z" fill="#1677d8"/><ellipse cx="3.25" cy="3.60" rx="1.9" ry="0.55" fill="#bfe4ff"/><path d="M0.3 5.30Q3.25 6.30 6.2 5.30V7.10Q3.25 7.90 0.3 7.10Z" fill="#1677d8"/><ellipse cx="3.25" cy="6.05" rx="1.9" ry="0.55" fill="#bfe4ff"/></svg>
<div class="a" style="left:487.2px;top:242.8px;width:128px;height:10.7px;background:#bdd4ea"></div>
<div class="t" style="left:506.70px;top:245px;font-size:6.60px;line-height:8px;font-weight:bold;color:#111;">Hydraulic regulation options</div>
<div class="a" style="left:487.2px;top:256.4px;width:6.6px;height:6.6px;background:#fff;border:0.9px solid #c2c2c2"></div>
<svg style="left:487.2px;top:256.4px" width="6.6" height="6.6" viewBox="0 0 6.6 6.6"><path d="M1.7 3.5L2.8 4.9L5 1.6" stroke="#3a3a3a" stroke-width="0.75" fill="none"/></svg>
<div class="t" style="left:496.00px;top:256px;font-size:6.30px;line-height:8px;transform:scaleX(0.881);color:#2e2e2e;">Calculate required pump pressure</div>
<div class="a" style="left:489.4px;top:265.4px;width:6.6px;height:6.6px;background:#fff;border:0.9px solid #c2c2c2"></div>
<svg style="left:489.4px;top:265.4px" width="6.6" height="6.6" viewBox="0 0 6.6 6.6"><path d="M1.7 3.5L2.8 4.9L5 1.6" stroke="#3a3a3a" stroke-width="0.75" fill="none"/></svg>
<div class="t" style="left:497.80px;top:266px;font-size:6.30px;line-height:8px;transform:scaleX(0.868);color:#2e2e2e;">Keep specified values</div>
<div class="t" style="left:487.50px;top:276px;font-size:6.30px;line-height:8px;transform:scaleX(0.882);color:#2e2e2e;font-style:italic;">Δp</div>
<div class="t" style="left:495.00px;top:278px;font-size:5.00px;line-height:6px;transform:scaleX(0.807);color:#2e2e2e;">min</div>
<div class="t" style="left:503.00px;top:276px;font-size:6.30px;line-height:8px;transform:scaleX(0.896);color:#2e2e2e;">on regulation valve</div>
<div class="a" style="left:487.5px;top:284.2px;width:55.799999999999955px;height:9.4px;background:#fff;border:1px solid #cfcfcf"></div>
<div class="t" style="left:489.50px;top:285px;font-size:6.30px;line-height:8px;transform:scaleX(0.860);color:#2e2e2e;">2,0</div>
<svg style="left:537.8px;top:284.7px" width="4" height="8"><path d="M0.3 3L1.8 1.3L3.3 3ZM0.3 5L1.8 6.7L3.3 5Z" fill="#222"/></svg>
<div class="a" style="left:545px;top:284.2px;width:19.6px;height:9.4px;background:linear-gradient(#efefef,#e4e4e4);border:1px solid #c9c9c9"></div>
<div class="t" style="left:550.50px;top:285px;font-size:6.30px;line-height:8px;transform:scaleX(0.829);color:#2e2e2e;">kPa</div>
<div class="t" style="left:487.50px;top:298px;font-size:6.30px;line-height:8px;transform:scaleX(0.882);color:#2e2e2e;font-style:italic;">Δp</div>
<div class="t" style="left:495.00px;top:300px;font-size:5.00px;line-height:6px;transform:scaleX(0.807);color:#2e2e2e;">min</div>
<div class="t" style="left:503.00px;top:298px;font-size:6.30px;line-height:8px;transform:scaleX(0.885);color:#2e2e2e;">on differential pressure valve</div>
<div class="a" style="left:487.5px;top:305.6px;width:55.799999999999955px;height:9.4px;background:#fff;border:1px solid #cfcfcf"></div>
<div class="t" style="left:489.50px;top:307px;font-size:6.30px;line-height:8px;transform:scaleX(0.860);color:#2e2e2e;">10,0</div>
<svg style="left:537.8px;top:306.1px" width="4" height="8"><path d="M0.3 3L1.8 1.3L3.3 3ZM0.3 5L1.8 6.7L3.3 5Z" fill="#222"/></svg>
<div class="a" style="left:545px;top:305.6px;width:19.6px;height:9.4px;background:linear-gradient(#efefef,#e4e4e4);border:1px solid #c9c9c9"></div>
<div class="t" style="left:550.50px;top:307px;font-size:6.30px;line-height:8px;transform:scaleX(0.829);color:#2e2e2e;">kPa</div>
<svg style="left:3.0px;top:3.0px" width="6" height="8" viewBox="0 0 6 8"><path d="M3 0.5C1.5 2.8 0.5 4 0.5 5.3a2.5 2.5 0 0 0 5 0C5.5 4 4.5 2.8 3 0.5Z" fill="#dff0fb" stroke="#3b8fd8" stroke-width="0.9"/></svg>
<svg style="left:15.0px;top:4.0px" width="9" height="7" viewBox="0 0 9 7"><path d="M1 3.5C2.5 1 6 0.5 7.8 3.2C8.6 5 7 6.6 5 6.6" stroke="#1d6fd1" stroke-width="1.5" fill="none"/><path d="M0.3 0.8L0.6 5H4.2Z" fill="#1d6fd1"/></svg>
<svg style="left:28.0px;top:4.0px" width="9" height="7" viewBox="0 0 9 7"><path d="M8 3.5C6.5 1 3 0.5 1.2 3.2C0.4 5 2 6.6 4 6.6" stroke="#b9b9b9" stroke-width="1.5" fill="none"/><path d="M8.7 0.8L8.4 5H4.8Z" fill="#b9b9b9"/></svg>
<svg style="left:41.0px;top:3.0px" width="8" height="8" viewBox="0 0 8 8"><rect x="0.3" y="0.3" width="7.4" height="7.4" rx="0.8" fill="#2f6fd0"/><rect x="1.5" y="0.8" width="5" height="2.8" fill="#dfe9f7"/><rect x="2" y="5" width="4" height="2.4" fill="#27406e"/></svg>
<svg style="left:54.0px;top:3.0px" width="9" height="8" viewBox="0 0 9 8"><path d="M0.5 3H3.5L4.3 4H8.5V7.7H0.5Z" fill="#f5c24e"/><path d="M0.5 7.7L1.8 4.6H8.8L8 7.7Z" fill="#f7d47a"/><path d="M3.5 3.3C4 1.5 5.5 0.6 7.2 1" stroke="#2e9b3a" stroke-width="1.3" fill="none"/><path d="M6.4 0L8.4 1.2L6.6 2.6Z" fill="#2e9b3a"/></svg>
<svg style="left:68.0px;top:3.0px" width="7" height="8" viewBox="0 0 7 8"><path d="M0.5 0.5H4.3L6.5 2.7V7.5H0.5Z" fill="#fff" stroke="#c8c8c8" stroke-width="0.7"/></svg>
<svg style="left:731.5px;top:18.8px" width="9" height="7.5" viewBox="0 0 9 7.5"><rect x="0.3" y="0.3" width="7.5" height="5" fill="#4a90e2" stroke="#2f6db5" stroke-width="0.6"/><rect x="1.2" y="1.2" width="5.7" height="3.2" fill="#bfe0ff"/><rect x="4.5" y="3" width="4" height="3.5" fill="#5b6f8a"/><rect x="2.5" y="5.8" width="3.5" height="1.2" fill="#3a5a85"/></svg>
<svg style="left:815.0px;top:21.6px" width="3" height="2" viewBox="0 0 3 2"><path d="M0 0H2.6L1.3 1.6Z" fill="#555"/></svg>
<svg style="left:822.0px;top:17.5px" width="8" height="10" viewBox="0 0 8 10"><path d="M0.8 9.3V4L4 0.9L7.2 4V9.3" stroke="#1d7fd6" stroke-width="1.2" fill="none"/><rect x="4.2" y="5.8" width="1" height="1" fill="#1d7fd6"/><rect x="5.6" y="5.8" width="1" height="1" fill="#1d7fd6"/><rect x="4.2" y="7.4" width="1" height="1" fill="#1d7fd6"/><rect x="5.6" y="7.4" width="1" height="1" fill="#1d7fd6"/></svg>
<svg style="left:876.0px;top:18.3px" width="8" height="8" viewBox="0 0 8 8"><circle cx="4" cy="4" r="3.8" fill="#1d5fcf"/><circle cx="3.5" cy="3" r="2.5" fill="#3d86e8" opacity="0.7"/><path d="M2.8 3.1a1.3 1.2 0 1 1 1.8 1.1c-0.4 0.2-0.6 0.4-0.6 0.9" stroke="#fff" stroke-width="0.8" fill="none"/><circle cx="4" cy="6.2" r="0.5" fill="#fff"/></svg>
<svg style="left:892.0px;top:20.5px" width="5" height="3" viewBox="0 0 5 3"><path d="M0.5 2.6L2.5 0.6L4.5 2.6" stroke="#444" stroke-width="0.8" fill="none"/></svg>
<svg style="left:4.0px;top:33.0px" width="12" height="15" viewBox="0 0 12 15"><rect x="0.4" y="0.4" width="11.2" height="14.2" fill="#8d9ed0" stroke="#6f80b5" stroke-width="0.7"/><rect x="1.5" y="1.5" width="9" height="2.4" fill="#eef4e4"/><rect x="1.5" y="5.0" width="1.8" height="1.3" fill="#e6ebf7"/><rect x="1.5" y="7.3" width="1.8" height="1.3" fill="#e6ebf7"/><rect x="1.5" y="9.6" width="1.8" height="1.3" fill="#e6ebf7"/><rect x="1.5" y="11.9" width="1.8" height="1.3" fill="#e6ebf7"/><rect x="3.9" y="5.0" width="1.8" height="1.3" fill="#e6ebf7"/><rect x="3.9" y="7.3" width="1.8" height="1.3" fill="#e6ebf7"/><rect x="3.9" y="9.6" width="1.8" height="1.3" fill="#e6ebf7"/><rect x="3.9" y="11.9" width="1.8" height="1.3" fill="#e6ebf7"/><rect x="6.3" y="5.0" width="1.8" height="1.3" fill="#e6ebf7"/><rect x="6.3" y="7.3" width="1.8" height="1.3" fill="#e6ebf7"/><rect x="6.3" y="9.6" width="1.8" height="1.3" fill="#e6ebf7"/><rect x="6.3" y="11.9" width="1.8" height="1.3" fill="#e6ebf7"/><rect x="8.7" y="5.0" width="1.8" height="1.3" fill="#e6ebf7"/><rect x="8.7" y="7.3" width="1.8" height="1.3" fill="#e6ebf7"/><rect x="8.7" y="9.6" width="1.8" height="1.3" fill="#e6ebf7"/><rect x="8.7" y="11.9" width="1.8" height="1.3" fill="#e6ebf7"/><circle cx="9.4" cy="5.6" r="0.9" fill="#e01d1d"/></svg>
<svg style="left:9.0px;top:56.5px" width="3" height="2" viewBox="0 0 3 2"><path d="M0 0H2.6L1.3 1.5Z" fill="#444"/></svg>
<svg style="left:20.7px;top:36.2px" width="8" height="8" viewBox="0 0 8 8"><rect x="0.5" y="3.5" width="7" height="4.3" fill="#b24a12"/><rect x="1.6" y="4.8" width="4.8" height="1.8" fill="#e8e0d0"/><path d="M0.8 3.2L2.2 1.2H6L7.4 3.2Z" fill="#e7a23b"/><path d="M1 0.8H7.6" stroke="#d9d31a" stroke-width="0.8"/></svg>
<svg style="left:31.0px;top:36.2px" width="7" height="8" viewBox="0 0 7 8"><path d="M0.6 1.5H6.4V7.6H0.6Z" fill="#f2f2f2" stroke="#c4c4c4" stroke-width="0.7"/><rect x="2.3" y="0.5" width="2.4" height="1.6" fill="#cfcfcf"/><path d="M1.6 3.5H5.4M1.6 5H5.4M1.6 6.5H4" stroke="#d5d5d5" stroke-width="0.6"/></svg>
<svg style="left:40.0px;top:36.0px" width="10" height="8.5" viewBox="0 0 10 8.5"><rect x="0" y="0" width="10" height="8.5" fill="#f4511e"/><path d="M3.5 1v6.5M1.5 2.5L3.5 4.2L1.5 6M5.5 2.5L3.5 4.2L5.5 6" stroke="#4b8ea8" stroke-width="0.9" fill="none"/><path d="M6.2 2.2A2.3 2.3 0 0 1 6.2 6.4Z" fill="#f8e33a"/></svg>
<svg style="left:52.0px;top:36.5px" width="6" height="8" viewBox="0 0 6 8"><path d="M3 0.5C1.8 2.8 0.6 4 0.6 5.2a2.4 2.4 0 0 0 4.8 0C5.4 4 4.2 2.8 3 0.5Z" fill="#f4f4f4" stroke="#bdbdbd" stroke-width="0.7"/></svg>
<svg style="left:20.7px;top:50.0px" width="8" height="8" viewBox="0 0 8 8"><circle cx="5.5" cy="2.8" r="2.3" fill="#bfbfbf" stroke="#555" stroke-width="0.7"/><path d="M4 2.8H7M5.5 1.3V4.3" stroke="#666" stroke-width="0.5"/><rect x="0.6" y="4.5" width="3" height="2.5" fill="#a8553a"/><path d="M0.3 7.6H7.8" stroke="#6b4a3a" stroke-width="0.7"/></svg>
<svg style="left:31.0px;top:50.0px" width="8.5" height="8" viewBox="0 0 8.5 8"><rect x="0.4" y="1" width="7.6" height="3.8" fill="#d8d8d8" stroke="#555" stroke-width="0.6"/><path d="M1.2 2.9H7.2" stroke="#888" stroke-width="0.7"/><ellipse cx="2.3" cy="6.8" rx="1.3" ry="0.9" fill="#f4e61a"/><ellipse cx="6.1" cy="6.8" rx="1.3" ry="0.9" fill="#f4e61a"/></svg>
<svg style="left:41.4px;top:50.0px" width="8" height="8" viewBox="0 0 8 8"><rect x="0.4" y="0.4" width="5" height="5.5" fill="#f2ddd4" stroke="#d07a6a" stroke-width="0.6"/><rect x="2.4" y="3" width="5.2" height="4.6" fill="#e9d3b0" stroke="#b98d5a" stroke-width="0.6"/><path d="M3.5 6.5L7 2.5" stroke="#e08a1e" stroke-width="1"/></svg>
<svg style="left:66.0px;top:36.0px" width="8.5" height="8" viewBox="0 0 8.5 8"><path d="M1.3 3.8C2.5 1.3 6 0.8 7.6 3.3C8.4 5.2 6.8 7 4.6 7.2" stroke="#1e6ed4" stroke-width="1.6" fill="none"/><path d="M0.2 1L0.6 5.4H4.4Z" fill="#1e6ed4"/></svg>
<svg style="left:76.0px;top:36.0px" width="8" height="8" viewBox="0 0 8 8"><rect x="0.5" y="0.5" width="5" height="6" fill="#f4f4f4" stroke="#c2c2c2" stroke-width="0.7"/><rect x="2.5" y="1.6" width="5" height="6" fill="#f4f4f4" stroke="#b5b5b5" stroke-width="0.7"/></svg>
<svg style="left:86.7px;top:36.0px" width="8" height="8" viewBox="0 0 8 8"><rect x="0.4" y="1" width="4.6" height="6.5" fill="#d8740f"/><rect x="1.6" y="0.3" width="2.2" height="1.4" fill="#8a5a2a"/><rect x="3.8" y="3" width="3.8" height="4.7" fill="#fafafa" stroke="#aaa" stroke-width="0.6"/></svg>
<svg style="left:97.0px;top:36.0px" width="7.5" height="8" viewBox="0 0 7.5 8"><path d="M2.2 0.3L4.2 5M5.3 0.3L3.3 5" stroke="#555" stroke-width="0.9"/><circle cx="2" cy="6.3" r="1.3" fill="none" stroke="#f08c1a" stroke-width="1"/><circle cx="5.5" cy="6.3" r="1.3" fill="none" stroke="#f08c1a" stroke-width="1"/></svg>
<svg style="left:107.0px;top:36.0px" width="8.5" height="8" viewBox="0 0 8.5 8"><path d="M1 1L7.5 7M7.5 1L1 7" stroke="#e2141c" stroke-width="2"/></svg>
<svg style="left:118.0px;top:36.4px" width="8" height="8" viewBox="0 0 8 8"><rect x="0.5" y="0.6" width="7" height="3.2" fill="#f2f2f2" stroke="#c0c0c0" stroke-width="0.6"/><path d="M4 3.8V7.2M0.3 7.4H7.7" stroke="#b0b0b0" stroke-width="0.7"/></svg>
<svg style="left:128.5px;top:36.4px" width="8" height="8" viewBox="0 0 8 8"><path d="M1 4L4 1L7 4V7.4H1Z" fill="#f2f2f2" stroke="#c0c0c0" stroke-width="0.6"/><path d="M0.3 7.4H7.7" stroke="#b0b0b0" stroke-width="0.7"/></svg>
<svg style="left:138.6px;top:36.4px" width="7.5" height="8" viewBox="0 0 7.5 8"><rect x="0.5" y="0.5" width="6.3" height="7" fill="#f2f2f2" stroke="#c0c0c0" stroke-width="0.6"/><path d="M2.5 0.8V7.4M4.5 0.8V7.4" stroke="#bdbdbd" stroke-width="0.6"/></svg>
<svg style="left:148.4px;top:36.4px" width="8" height="8" viewBox="0 0 8 8"><circle cx="4" cy="4" r="3.4" fill="#f6f6f6" stroke="#dadada" stroke-width="0.6"/><path d="M2.4 4L3.6 5.2L5.8 2.8" stroke="#d8d8d8" stroke-width="0.6" fill="none"/></svg>
<svg style="left:158.3px;top:39.7px" width="3" height="2" viewBox="0 0 3 2"><path d="M0 0H2.4L1.2 1.4Z" fill="#444"/></svg>
<svg style="left:164.5px;top:33.0px" width="14" height="14.5" viewBox="0 0 14 14.5"><rect x="0.5" y="0.5" width="13" height="13.5" fill="none" stroke="#707070" stroke-width="0.7" stroke-dasharray="1.5 1.5"/><path d="M4.8 10L7 4L9.2 10M5.6 8H8.4" stroke="#555" stroke-width="0.7" fill="none"/></svg>
<svg style="left:169.7px;top:56.7px" width="3" height="2" viewBox="0 0 3 2"><path d="M0 0H2.4L1.2 1.4Z" fill="#444"/></svg>
<svg style="left:66.0px;top:50.7px" width="8.5" height="7" viewBox="0 0 8.5 7"><path d="M7.5 3.5C6.3 1 2.8 0.6 1.2 3C0.4 5 2 6.6 4 6.8" stroke="#bdbdbd" stroke-width="1.4" fill="none"/><path d="M8.3 0.8L8 5H4.2Z" fill="#bdbdbd"/></svg>
<svg style="left:76.0px;top:50.7px" width="8" height="7" viewBox="0 0 8 7"><rect x="0.5" y="0.3" width="7" height="6.4" fill="#f6f6f6" stroke="#cdcdcd" stroke-width="0.6"/><path d="M4 2.5V4.5" stroke="#ccc" stroke-width="0.6"/></svg>
<svg style="left:89.0px;top:50.5px" width="3" height="8" viewBox="0 0 3 8"><path d="M1.5 0V7.6" stroke="#c4c4c4" stroke-width="0.6"/><path d="M0.6 3L1.5 4.6L2.4 3" stroke="#b5b5b5" stroke-width="0.6" fill="none"/></svg>
<svg style="left:99.0px;top:50.5px" width="3" height="8" viewBox="0 0 3 8"><path d="M1.5 0V7.6" stroke="#b5b5b5" stroke-width="0.6"/><rect x="0.6" y="3" width="1.8" height="2" fill="#bdbdbd"/></svg>
<svg style="left:107.0px;top:50.5px" width="8.5" height="7.5" viewBox="0 0 8.5 7.5"><rect x="0.3" y="0.5" width="5.5" height="6.5" fill="#eee"/><path d="M0.5 1.5H5.5M0.5 3H5.5M0.5 4.5H5.5" stroke="#6a7a6a" stroke-width="0.5"/><path d="M6 2L8 3.6L6 5.2Z" fill="#e0281e"/><circle cx="6.8" cy="6.6" r="1" fill="#e8e020"/></svg>
<svg style="left:118.0px;top:50.0px" width="8" height="8" viewBox="0 0 8 8"><path d="M0.5 0.5C2 2 2 6 0.5 7.5M7.5 0.5C6 2 6 6 7.5 7.5" stroke="#bbb" stroke-width="0.7" fill="none"/><path d="M2.5 4H5.5" stroke="#ccc" stroke-width="0.6"/></svg>
<svg style="left:128.0px;top:50.0px" width="8" height="8" viewBox="0 0 8 8"><path d="M0.5 1.8H7.5M0.5 4H7.5M0.5 6.2H7.5" stroke="#6f7f8f" stroke-width="0.9"/></svg>
<svg style="left:138.6px;top:50.0px" width="7.5" height="8" viewBox="0 0 7.5 8"><rect x="0.5" y="0.5" width="6.3" height="7" fill="#f2f2f2" stroke="#bdbdbd" stroke-width="0.6"/><path d="M3.5 0.8V7.4" stroke="#aaa" stroke-width="0.7"/></svg>
<svg style="left:186.0px;top:36.3px" width="8" height="8" viewBox="0 0 8 8"><path d="M0.8 7.3L3 5.1" stroke="#f0902a" stroke-width="1.3"/><circle cx="4.8" cy="3.2" r="2.7" fill="#dfeefa" stroke="#4d7fb7" stroke-width="0.7"/><path d="M3.3 3.2H6.3M4.8 1.7V4.7" stroke="#1aa02a" stroke-width="1"/></svg>
<svg style="left:196.0px;top:36.3px" width="8" height="8" viewBox="0 0 8 8"><path d="M0.8 7.3L3 5.1" stroke="#f0902a" stroke-width="1.3"/><circle cx="4.8" cy="3.2" r="2.7" fill="#dfeefa" stroke="#4d7fb7" stroke-width="0.7"/><path d="M3.3 3.2H6.3" stroke="#e0202a" stroke-width="1"/></svg>
<svg style="left:206.3px;top:36.3px" width="8" height="8" viewBox="0 0 8 8"><path d="M0.8 7.3L3 5.1" stroke="#f0902a" stroke-width="1.3"/><circle cx="4.8" cy="3.2" r="2.7" fill="#dfeefa" stroke="#4d7fb7" stroke-width="0.7"/><path d="M3.6 4.6L4.8 1.6L6 4.6" stroke="#2a5fd0" stroke-width="0.9" fill="none"/></svg>
<svg style="left:217.0px;top:36.3px" width="7.5" height="8" viewBox="0 0 7.5 8"><rect x="0.5" y="0.5" width="6.5" height="7" fill="none" stroke="#c4c4c4" stroke-width="0.6" stroke-dasharray="1 1"/></svg>
<svg style="left:226.5px;top:39.8px" width="3" height="2" viewBox="0 0 3 2"><path d="M0 0H2.4L1.2 1.4Z" fill="#444"/></svg>
<svg style="left:186.0px;top:50.0px" width="8" height="8" viewBox="0 0 8 8"><path d="M1 4.5L4 1.5L7 4.5M1.5 7.5V5.5M6.5 7.5V5.5" stroke="#bdbdbd" stroke-width="0.7" fill="none" stroke-dasharray="1 0.6"/></svg>
<svg style="left:196.0px;top:50.0px" width="8" height="8" viewBox="0 0 8 8"><path d="M0.8 7.3L3 5.1" stroke="#f0902a" stroke-width="1.3"/><circle cx="4.8" cy="3.2" r="2.7" fill="#dfeefa" stroke="#4d7fb7" stroke-width="0.7"/><path d="M3.5 7.6H7.6" stroke="#bbb" stroke-width="0.5" stroke-dasharray="0.8 0.8"/></svg>
<svg style="left:206.3px;top:50.0px" width="8" height="8" viewBox="0 0 8 8"><path d="M0.8 7.3L3 5.1" stroke="#f0902a" stroke-width="1.3"/><circle cx="4.8" cy="3.2" r="2.7" fill="#dfeefa" stroke="#4d7fb7" stroke-width="0.7"/><path d="M3.5 7.3H7.3" stroke="#bbb" stroke-width="0.6"/></svg>
<svg style="left:216.0px;top:50.0px" width="8" height="8" viewBox="0 0 8 8"><rect x="0.5" y="3.5" width="4" height="4" fill="#fafafa" stroke="#c4c4c4" stroke-width="0.6"/><rect x="3.5" y="0.5" width="4" height="4" fill="none" stroke="#c4c4c4" stroke-width="0.6"/></svg>
<svg style="left:226.5px;top:53.4px" width="3" height="2" viewBox="0 0 3 2"><path d="M0 0H2.4L1.2 1.4Z" fill="#555"/></svg>
<svg style="left:238.0px;top:33.0px" width="17" height="15" viewBox="0 0 17 15"><rect x="0.5" y="0.4" width="12" height="14.2" fill="#fbfbfb" stroke="#c4c4c4" stroke-width="0.7"/><path d="M2 2H11M2 4H11M2 6H11M2 8H11M2 10H11M2 12H11" stroke="#b8b8b8" stroke-width="0.5"/><path d="M2 3.9Q2 3.1 3 3.1H8.5Q11 2.9 12.8 3.8V8.4H8.3Q6.5 8.4 6.2 6.5V4.6H3Q2 4.6 2 3.9Z" fill="#da8a55"/><rect x="12.8" y="3.4" width="3.2" height="5.2" rx="0.6" fill="#1e1e1e"/></svg>
<svg style="left:244.7px;top:56.7px" width="3" height="2" viewBox="0 0 3 2"><path d="M0 0H2.4L1.2 1.4Z" fill="#444"/></svg>
<svg style="left:267.0px;top:32.8px" width="12.5" height="14.5" viewBox="0 0 12.5 14.5"><path d="M0.5 0.5H8.5L12 4V13.8H0.5Z" fill="#fff" stroke="#c8c8c8" stroke-width="0.7"/><rect x="0.5" y="9.6" width="11.5" height="4.2" fill="#d9262a"/><path d="M2 11.7H10.5" stroke="#f4c0c0" stroke-width="0.8" stroke-dasharray="1 0.5"/><path d="M2.6 2.6L4.4 3.9L2.6 5.2Z" fill="#e02020"/><path d="M5 4H9.5M7 2.5V7" stroke="#ddd" stroke-width="0.5"/></svg>
<svg style="left:287.9px;top:35.0px" width="15.5" height="10.5" viewBox="0 0 15.5 10.5"><path d="M0.5 0.6H15M0.5 0V1.2M15 0V1.2" stroke="#7a8a9a" stroke-width="0.6"/><rect x="0.5" y="4.8" width="14.5" height="4.8" fill="#f0f0f0" stroke="#8a9aa8" stroke-width="0.7"/><path d="M4 7.2H6M8.5 7.2H10.5M12 5V9.5" stroke="#9aa" stroke-width="0.6"/></svg>
<svg style="left:312.0px;top:33.0px" width="16" height="15" viewBox="0 0 16 15"><path d="M7.7 0.9V14M1 7.35H15" stroke="#fff" stroke-width="2.2" opacity="0.8"/><path d="M7.7 0.9V14M1 7.35H15" stroke="#2e2e2e" stroke-width="0.9"/><path d="M3.8 7.35L7.7 3.5V7.35ZM7.7 7.35H12L7.7 12Z" fill="#3a3a3a"/></svg>
<svg style="left:343.5px;top:34.0px" width="15" height="13.5" viewBox="0 0 15 13.5"><rect x="0.5" y="0.5" width="14" height="12.5" fill="#f0f0f0" stroke="#dedede" stroke-width="0.7"/><rect x="1.5" y="1.5" width="10" height="3" fill="#f8f8f8"/><rect x="1.5" y="4.8" width="10" height="7.5" fill="#e6e6e6"/><rect x="11.5" y="4.8" width="2.3" height="7.5" fill="#fafafa"/></svg>
<svg style="left:385.8px;top:34.0px" width="15" height="13.5" viewBox="0 0 15 13.5"><rect x="0.5" y="0.5" width="14" height="12.5" fill="#fff" stroke="#b8b8b8" stroke-width="0.7"/><path d="M1.5 3H13.5" stroke="#e04040" stroke-width="0.8" stroke-dasharray="1.2 0.8"/><path d="M1.5 11.5L13.5 8" stroke="#e04040" stroke-width="0.8" stroke-dasharray="1.2 0.8"/><path d="M3 9V6.4H2L4 4.2L6 6.4H5V9Z" fill="#e03030"/></svg>
<svg style="left:419.0px;top:36.5px" width="8.5" height="8" viewBox="0 0 8.5 8"><rect x="0.4" y="0.4" width="7.6" height="7.2" fill="#e9e9e9" stroke="#a8a8a8" stroke-width="0.6"/><rect x="2" y="1.2" width="4.5" height="5.8" fill="#fafafa"/><path d="M2.5 1.5V6.8M5.9 1.5V6.8" stroke="#d8604a" stroke-width="0.7"/></svg>
<svg style="left:419.0px;top:50.3px" width="8.5" height="8" viewBox="0 0 8.5 8"><rect x="0.4" y="0.4" width="7.6" height="7.2" fill="#e6e6e6" stroke="#a8a8a8" stroke-width="0.6"/><rect x="2.2" y="1" width="4" height="6" fill="#fdfdfd"/><path d="M3.2 5.2L4.2 3.2L5.2 5.2Z" fill="#e02020"/></svg>
<svg style="left:434.0px;top:35.5px" width="15.5" height="8.5" viewBox="0 0 15.5 8.5"><path d="M0.3 0.5L4.5 4.2" stroke="#555" stroke-width="0.7"/><rect x="4.5" y="2.5" width="10.5" height="5.3" rx="1.2" fill="#fff" stroke="#777" stroke-width="0.7"/></svg>
<svg style="left:440.0px;top:56.2px" width="3" height="2" viewBox="0 0 3 2"><path d="M0 0H2.4L1.2 1.4Z" fill="#555"/></svg>
<svg style="left:465.0px;top:33.0px" width="14" height="14" viewBox="0 0 14 14"><text x="7" y="4" font-size="5.4" font-style="italic" font-weight="bold" text-anchor="middle" font-family="Liberation Sans" fill="#333">2.0</text><path d="M0.8 4.2V13.5M13.2 4.2V13.5" stroke="#1f6fe0" stroke-width="0.9"/><path d="M1 6.3H13" stroke="#1f6fe0" stroke-width="0.8"/><path d="M1 6.3L2.8 5.1V7.5ZM13 6.3L11.2 5.1V7.5Z" fill="#1f6fe0"/></svg>
<svg style="left:488.5px;top:56.2px" width="3" height="2" viewBox="0 0 3 2"><path d="M0 0H2.4L1.2 1.4Z" fill="#555"/></svg>
<svg style="left:494.0px;top:36.3px" width="8" height="7.5" viewBox="0 0 8 7.5"><rect x="0.5" y="0.5" width="7" height="6.5" fill="#eee" stroke="#c8c8c8" stroke-width="0.7"/><path d="M2 5.5L6 1.5" stroke="#b5b5b5" stroke-width="0.8"/></svg>
<svg style="left:504.0px;top:36.3px" width="8" height="7.5" viewBox="0 0 8 7.5"><path d="M0.8 0.3V7.2" stroke="#aaa" stroke-width="1.2"/><path d="M2 1.5H7.6M2 3.5H7.6M2 5.5H7.6" stroke="#c2c2c2" stroke-width="0.9"/></svg>
<svg style="left:514.7px;top:36.3px" width="7.5" height="7.5" viewBox="0 0 7.5 7.5"><path d="M1 1.5H3M4.5 1.5H6.5M0.5 3.8H7M0.5 6H7M2 2.5V7M5 2.5V7" stroke="#c8c8c8" stroke-width="0.8"/></svg>
<svg style="left:525.0px;top:36.3px" width="8" height="7.5" viewBox="0 0 8 7.5"><rect x="0.5" y="0.5" width="7" height="6.5" fill="#e6e6e6" stroke="#c4c4c4" stroke-width="0.8"/><path d="M2.2 2.2L5.5 5.2M2.2 2.2H4M2.2 2.2V4" stroke="#fafafa" stroke-width="0.8"/></svg>
<svg style="left:494.0px;top:50.1px" width="7.5" height="7" viewBox="0 0 7.5 7"><rect x="0.5" y="0.5" width="6.5" height="6" fill="#f0f0f0" stroke="#cfcfcf" stroke-width="0.7"/><path d="M0.5 3.5H7M3.7 0.5V6.5" stroke="#d4d4d4" stroke-width="0.7"/></svg>
<svg style="left:504.5px;top:50.3px" width="7.5" height="7" viewBox="0 0 7.5 7"><path d="M0.4 4.6L2.8 3L5.8 3.6L7.2 5.4L3.8 6.6Z" fill="#e6ea12"/><path d="M4.2 3.2L6.2 0.6" stroke="#3a4a7a" stroke-width="0.9"/></svg>
<div class="t" style="left:514.20px;top:50px;font-size:6.00px;line-height:8px;transform:scaleX(0.706);font-weight:bold;color:#444;-webkit-text-stroke:0;">Abc</div>
<svg style="left:5.5px;top:76.0px" width="8" height="8.5" viewBox="0 0 8 8.5"><rect x="0.5" y="1.5" width="5.5" height="6.5" fill="#f5ebd8"/><path d="M1.2 1.8H6.8L7.5 4.2H2Z" fill="#e07e3a"/><rect x="6" y="2" width="1.8" height="3" fill="#222"/></svg>
<svg style="left:50.4px;top:77.9px" width="5" height="5" viewBox="0 0 5 5"><path d="M0.4 0.4L4.4 4.4M4.4 0.4L0.4 4.4" stroke="#fff" stroke-width="0.75"/></svg>
<svg style="left:61.0px;top:76.0px" width="7" height="8" viewBox="0 0 7 8"><path d="M0.5 7.5L6.5 0.8" stroke="#8a8a8a" stroke-width="0.7"/><path d="M0.5 7.5V3.5M0.5 7.5H5" stroke="#999" stroke-width="0.6"/><path d="M3 6L6.5 2.5" stroke="#d8a030" stroke-width="0.9"/></svg>
<svg style="left:107.5px;top:76.0px" width="7" height="8" viewBox="0 0 7 8"><path d="M0.5 7.5L6.5 0.8" stroke="#8a8a8a" stroke-width="0.7"/><path d="M0.5 7.5V3.5M0.5 7.5H5" stroke="#999" stroke-width="0.6"/><path d="M3 6L6.5 2.5" stroke="#d8a030" stroke-width="0.9"/></svg>
<svg style="left:150.3px;top:75.5px" width="7.5" height="9" viewBox="0 0 7.5 9"><path d="M0.8 0.5H5L7 2.5V8.5H0.8Z" fill="#f6f6f6" stroke="#b0b0b0" stroke-width="0.6"/><circle cx="3.8" cy="5" r="1.8" fill="none" stroke="#6a9ad0" stroke-width="0.7"/><path d="M0.5 8.5L2.5 6.5" stroke="#e8a040" stroke-width="0.9"/></svg>
<svg style="left:893.0px;top:79.5px" width="4" height="2.5" viewBox="0 0 4 2.5"><path d="M0 0H3.4L1.7 2Z" fill="#555"/></svg>
<svg style="left:15.0px;top:87.0px" width="8" height="9" viewBox="0 0 8 9"><rect x="0.5" y="0.5" width="1.4" height="8" fill="#b2531a"/><rect x="1.9" y="0.5" width="4.8" height="8" fill="#e9e9e9"/><path d="M7 1V3" stroke="#f06d9a" stroke-width="0.8"/><path d="M7 3V5" stroke="#7bc85a" stroke-width="0.8"/><path d="M7 5V7" stroke="#5aa0e0" stroke-width="0.8"/><path d="M7 7V8.5" stroke="#e8c030" stroke-width="0.8"/></svg>
<svg style="left:14.0px;top:132.5px" width="8.5" height="8.5" viewBox="0 0 8.5 8.5"><rect x="0.6" y="1" width="6.6" height="6.8" rx="1" fill="#fbf3ea" stroke="#e39a4a" stroke-width="0.8"/><path d="M1.8 3H4.5M1.8 4.5H4" stroke="#e07070" stroke-width="0.5"/><path d="M2.8 7L7.8 1.8" stroke="#f0a020" stroke-width="1.4"/><path d="M2.2 7.6L2.8 6.4L3.6 7.1Z" fill="#555"/></svg>
<svg style="left:14.9px;top:142.5px" width="6.5" height="7.5" viewBox="0 0 6.5 7.5"><path d="M0.2 0.8Q3.25 2.4 6.3 0.8V6.8Q3.25 8.2 0.2 6.8Z" fill="#1b86e0"/><path d="M0.6 2.7Q3.25 3.7 5.9 2.7M0.6 4.8Q3.25 5.8 5.9 4.8" stroke="#0d5cb0" stroke-width="0.6" fill="none"/><path d="M1.2 1.7Q3.25 2.3 5.3 1.7M1.2 3.8Q3.25 4.4 5.3 3.8M1.2 5.9Q3.25 6.5 5.3 5.9" stroke="#a8dcff" stroke-width="0.6" fill="none"/></svg>
<svg style="left:15.0px;top:151.0px" width="8" height="8" viewBox="0 0 8 8"><path d="M0.6 0.5V7.4H7.5" stroke="#9a9a9a" stroke-width="0.7" fill="none"/><path d="M1.5 6.5L3.5 3.5L5 5L7.3 1.2" stroke="#6f8fb0" stroke-width="0.7" fill="none"/><path d="M3 6.6L7 2.5" stroke="#e0a040" stroke-width="0.8"/></svg>
<svg style="left:14.5px;top:161.0px" width="7.5" height="7.5" viewBox="0 0 7.5 7.5"><rect x="0.4" y="0.4" width="6.7" height="6.7" fill="#f6f6f6" stroke="#a8a8a8" stroke-width="0.6"/><rect x="2" y="2.2" width="4" height="4.5" fill="#c9a88a" stroke="#6a5040" stroke-width="0.5"/><path d="M2 4.3H6M4 2.2V6.7" stroke="#6a5040" stroke-width="0.4"/></svg>
<svg style="left:14.8px;top:196.8px" width="7.2" height="7.4" viewBox="0 0 7.2 7.4"><defs><linearGradient id="tg" x1="0" x2="1"><stop offset="0" stop-color="#f6ea3a"/><stop offset="1" stop-color="#f57a1a"/></linearGradient></defs><path d="M3.4 0.3A3.4 3.4 0 0 1 3.4 7.1Z" fill="url(#tg)"/><path d="M3.2 0.5V7M0.6 1.8L3.2 3.6L0.6 5.4M0.3 3.6H3.2" stroke="#3aa6da" stroke-width="1" fill="none"/></svg>
<svg style="left:14.0px;top:366.8px" width="8.5" height="8" viewBox="0 0 8.5 8"><path d="M0.4 1.6L2.4 0.4L4.6 1.4V4.2L2.6 5.4L0.4 4.2Z" fill="#e0403a"/><path d="M5.2 0.5L7.8 1.6V4.8L5.8 5.5Z" fill="#2fbf3a"/><path d="M2.2 4.4L4.6 3.2L7 4.4V7L4.6 8L2.2 7Z" fill="#2d8ef0"/><path d="M3.2 4.9L4.6 4.3L6 4.9" stroke="#cfe6ff" stroke-width="0.5" fill="none"/></svg>
</body></html>
